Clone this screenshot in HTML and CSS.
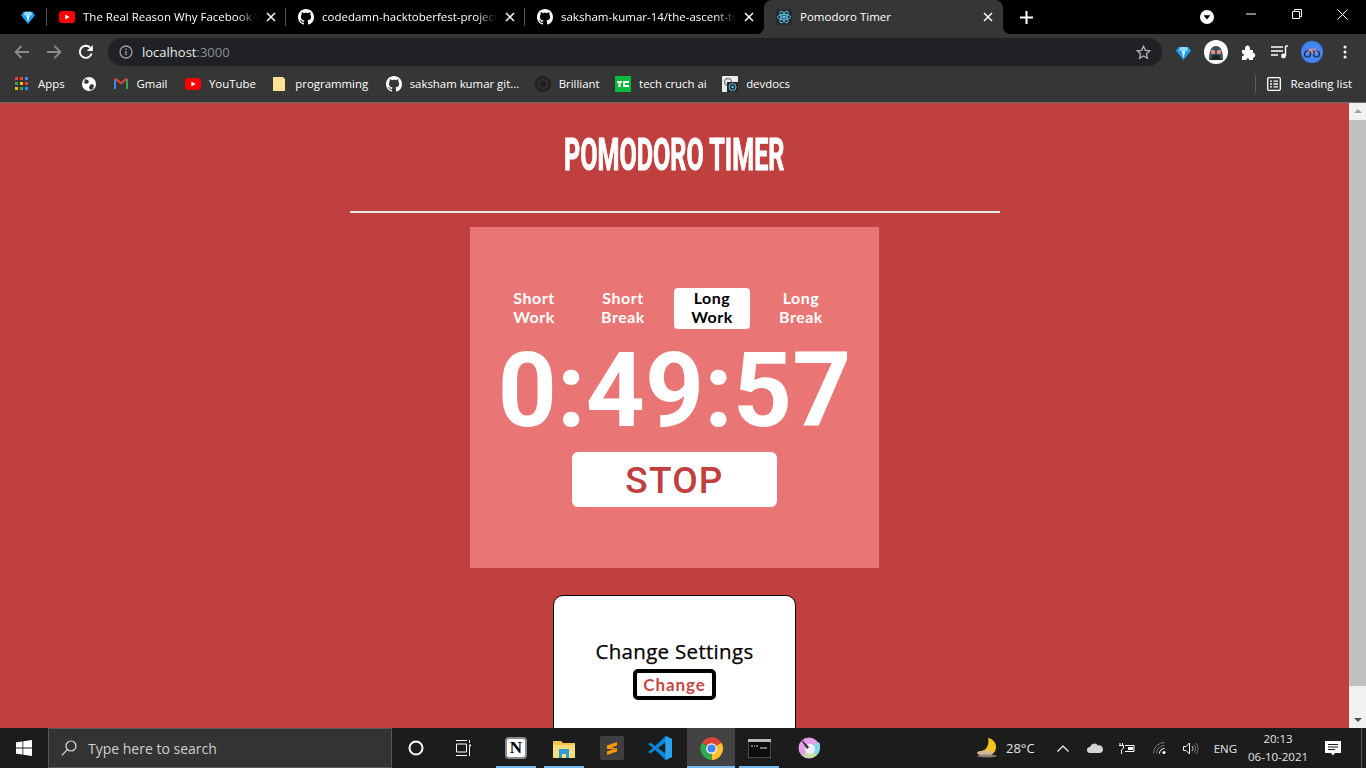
FILE: index.html
```html
<!DOCTYPE html>
<html lang="en">
  <head>
    <meta charset="UTF-8" />
    <meta name="viewport" content="width=device-width, initial-scale=1.0" />
    <title>Pomodoro Timer</title>
    <link rel="stylesheet" href="styles.css">
  </head>
  <body>
    <svg class="defs" width="0" height="0">
      <defs>
        <symbol id="gh" viewBox="0 0 16 16"><path fill="#fff" d="M8 0C3.58 0 0 3.58 0 8c0 3.54 2.29 6.53 5.47 7.59.4.07.55-.17.55-.38 0-.19-.01-.82-.01-1.49-2.01.37-2.53-.49-2.69-.94-.09-.23-.48-.94-.82-1.13-.28-.15-.68-.52-.01-.53.63-.01 1.08.58 1.23.82.72 1.21 1.87.87 2.33.66.07-.52.28-.87.51-1.07-1.78-.2-3.64-.89-3.64-3.95 0-.87.31-1.59.82-2.15-.08-.2-.36-1.02.08-2.12 0 0 .67-.21 2.2.82.64-.18 1.32-.27 2-.27.68 0 1.36.09 2 .27 1.53-1.04 2.2-.82 2.2-.82.44 1.1.16 1.92.08 2.12.51.56.82 1.27.82 2.15 0 3.07-1.87 3.75-3.65 3.95.29.25.54.73.54 1.48 0 1.07-.01 1.93-.01 2.2 0 .21.15.46.55.38A8.013 8.013 0 0016 8c0-4.42-3.58-8-8-8z"/></symbol>
        <symbol id="yt" viewBox="0 0 16 12"><rect width="16" height="12" rx="3" fill="#f00"/><path d="M6.3 3.4v5.2L10.6 6z" fill="#fff"/></symbol>
        <symbol id="gem" viewBox="0 0 16 16"><path d="M3 2h10l3 4-8 10L0 6z" fill="#1e9df2"/><path d="M4.5 2h7L13 6H3z" fill="#8fdcff"/><path d="M6 6h4l-2 8z" fill="#d5f4ff"/></symbol>
        <symbol id="x" viewBox="0 0 10 10"><path d="M1 1l8 8M9 1L1 9" stroke="#fff" stroke-width="1.5" fill="none"/></symbol>
        <symbol id="atom" viewBox="0 0 16 16"><rect width="16" height="16" rx="2" fill="#22282c"/><g fill="none" stroke="#61dafb" stroke-width=".8"><ellipse cx="8" cy="8" rx="6.6" ry="2.6"/><ellipse cx="8" cy="8" rx="6.6" ry="2.6" transform="rotate(60 8 8)"/><ellipse cx="8" cy="8" rx="6.6" ry="2.6" transform="rotate(120 8 8)"/></g><circle cx="8" cy="8" r="1.4" fill="#61dafb"/></symbol>
      </defs>
    </svg>

    <div class="tabstrip">
      <div class="pinned"><svg width="14" height="14"><use href="#gem"/></svg></div>
      <div class="tab sep">
        <svg class="fav yt-fav" width="16" height="12"><use href="#yt"/></svg>
        <span class="tab-title">The Real Reason Why Facebook V</span>
        <svg class="tab-x" width="10" height="10"><use href="#x"/></svg>
      </div>
      <div class="tab sep">
        <svg class="fav" width="16" height="16"><use href="#gh"/></svg>
        <span class="tab-title">codedamn-hacktoberfest-project</span>
        <svg class="tab-x" width="10" height="10"><use href="#x"/></svg>
      </div>
      <div class="tab">
        <svg class="fav" width="16" height="16"><use href="#gh"/></svg>
        <span class="tab-title">saksham-kumar-14/the-ascent-to</span>
        <svg class="tab-x" width="10" height="10"><use href="#x"/></svg>
      </div>
      <div class="tab active">
        <svg class="fav" width="16" height="16"><use href="#atom"/></svg>
        <span class="tab-title">Pomodoro Timer</span>
        <svg class="tab-x" width="10" height="10"><use href="#x"/></svg>
      </div>
      <svg class="new-tab" width="13" height="13" viewBox="0 0 13 13"><path d="M6.5 0v13M0 6.5h13" stroke="#fff" stroke-width="2"/></svg>
      <div class="window-btns">
        <span class="tab-search"><svg width="14" height="14" viewBox="0 0 14 14"><circle cx="7" cy="7" r="7" fill="#fff"/><path d="M3.600 5.200h6.800L7 9.600z" fill="#000"/></svg></span>
        <svg class="win-btn win-min" width="10" height="10" viewBox="0 0 10 10"><path d="M0 5h10" stroke="#fff"/></svg>
        <svg class="win-btn win-max" width="10" height="10" viewBox="0 0 10 10"><path d="M.5 2.500h7v7h-7zM2.500 2.500v-2h7v7h-2" fill="none" stroke="#fff"/></svg>
        <svg class="win-btn win-close" width="11" height="11" viewBox="0 0 11 11"><path d="M.5.5l10 10M10.500.5l-10 10" stroke="#fff"/></svg>
      </div>
    </div>

    <div class="toolbar">
      <svg class="nav" width="16" height="14" viewBox="0 0 16 14"><path d="M15 7H2M7.500 1L1.500 7l6 6" fill="none" stroke="#8b8c8e" stroke-width="1.800"/></svg>
      <svg class="nav" width="16" height="14" viewBox="0 0 16 14"><path d="M1 7h13M8.500 1l6 6-6 6" fill="none" stroke="#8b8c8e" stroke-width="1.800"/></svg>
      <svg class="nav" width="16" height="16" viewBox="0 0 16 16"><path d="M13.600 9.500A6 6 0 1 1 12.300 3.800" fill="none" stroke="#fff" stroke-width="1.900"/><path d="M14.800 1v6h-6z" fill="#fff"/></svg>
      <div class="omnibox">
        <svg width="14" height="14" viewBox="0 0 14 14"><circle cx="7" cy="7" r="6" fill="none" stroke="#9aa0a6" stroke-width="1.300"/><path d="M7 6v4.200M7 3.500v1.400" stroke="#9aa0a6" stroke-width="1.300"/></svg>
        <span class="url">localhost<span class="url-port">:3000</span></span>
        <svg class="star" width="15" height="15" viewBox="0 0 15 15"><path d="M7.500 1.300l1.900 4 4.400.5-3.300 3 .9 4.400-3.900-2.200-3.900 2.200.9-4.400-3.300-3 4.400-.5z" fill="none" stroke="#b5b6b8" stroke-width="1.300"/></svg>
      </div>
      <div class="ext">
        <svg class="ext-gem" width="15" height="15"><use href="#gem"/></svg>
        <span class="ext-avatar"><svg width="24" height="24" viewBox="0 0 24 24"><circle cx="12" cy="12" r="12" fill="#fff"/><path d="M5 20c0-6 1-14 7-14s7 8 7 14z" fill="#2f5566"/><path d="M7 20l2-5h6l2 5z" fill="#222"/><circle cx="9" cy="12" r="2.300" fill="#f28b6c"/><circle cx="15" cy="12" r="2.300" fill="#f28b6c"/></svg></span>
        <svg class="ext-puzzle" width="15" height="15" viewBox="0 0 15 15"><path d="M1 5h3c-.5-3 1-4.500 2.500-4.500S9.500 2 9 5h3v3c3-.5 3 5 0 4.500V15H8c.5-2.500-3-2.500-2.500 0H1v-4c2.500.5 2.500-3 0-2.500z" fill="#fff"/></svg>
        <svg class="ext-media" width="17" height="14" viewBox="0 0 17 14"><path d="M0 2h12M0 6h12M0 10h7" stroke="#fff" stroke-width="1.400"/><path d="M14.500 1v10" stroke="#fff" stroke-width="1.400"/><path d="M14.500 1H17" stroke="#fff" stroke-width="1.400"/><circle cx="12.500" cy="11" r="2.400" fill="#fff"/></svg>
        <span class="ext-profile"><svg width="22" height="22" viewBox="0 0 22 22"><circle cx="11" cy="11" r="11" fill="#4285f4"/><circle cx="6.500" cy="13" r="3" fill="none" stroke="#1f2a44" stroke-width="1.200"/><circle cx="15.500" cy="13" r="3" fill="none" stroke="#1f2a44" stroke-width="1.200"/><path d="M6.500 13l3-5h5l1 5M9.500 8l2.500 5" fill="none" stroke="#f28b6c" stroke-width="1.200"/></svg></span>
        <svg class="ext-menu" width="4" height="14" viewBox="0 0 4 14"><circle cx="2" cy="2" r="1.500" fill="#fff"/><circle cx="2" cy="7" r="1.500" fill="#fff"/><circle cx="2" cy="12" r="1.500" fill="#fff"/></svg>
      </div>
    </div>

    <div class="bookmarks">
      <div class="mark mark-apps">
        <svg width="13" height="13" viewBox="0 0 13 13"><g fill="#ea4335"><rect width="3" height="3"/><rect x="5" width="3" height="3"/></g><rect x="10" width="3" height="3" fill="#4285f4"/><rect y="5" width="3" height="3" fill="#34a853"/><rect x="5" y="5" width="3" height="3" fill="#fbbc05"/><rect x="10" y="5" width="3" height="3" fill="#ea4335"/><rect y="10" width="3" height="3" fill="#fbbc05"/><rect x="5" y="10" width="3" height="3" fill="#34a853"/><rect x="10" y="10" width="3" height="3" fill="#4285f4"/></svg>
        Apps
      </div>
      <div class="mark">
        <svg width="14" height="14" viewBox="0 0 14 14"><circle cx="7" cy="7" r="7" fill="#fff"/><path d="M3 2l3 1 1 2-2 2-3-1zM9 7l3 1-1 4-3 1-1-3z" fill="#35363a"/></svg>
      </div>
      <div class="mark mark-gmail">
        <svg width="14" height="11" viewBox="0 0 14 11"><path d="M0 11V1l2 .5V11z" fill="#4285f4"/><path d="M14 11V1l-2 .5V11z" fill="#34a853"/><path d="M0 1c1-1 2-1 2.500-.5L7 4l4.500-3.500c.5-.5 1.500-.5 2.500.5L7 6.500z" fill="#ea4335"/></svg>
        Gmail
      </div>
      <div class="mark">
        <svg width="16" height="12"><use href="#yt"/></svg>
        YouTube
      </div>
      <div class="mark mark-folder">
        <svg width="12" height="14" viewBox="0 0 12 14"><path d="M0 0h10l2 2v12H0z" fill="#fde293"/></svg>
        programming
      </div>
      <div class="mark">
        <svg width="16" height="16"><use href="#gh"/></svg>
        saksham kumar git...
      </div>
      <div class="mark tight">
        <svg width="16" height="16" viewBox="0 0 16 16"><circle cx="8" cy="8" r="8" fill="#202020"/><circle cx="8" cy="8" r="4.500" fill="none" stroke="#3c3c3c" stroke-width="2" stroke-dasharray="1.500 1"/></svg>
        Brilliant
      </div>
      <div class="mark tight">
        <svg width="16" height="16" viewBox="0 0 16 16"><rect width="16" height="16" fill="#0dba3f"/><path d="M2 5h5v2H5.500v4h-2V7H2zM8 5h6v2H10v2h4v2H8z" fill="#fff"/></svg>
        tech cruch ai
      </div>
      <div class="mark tight">
        <svg width="16" height="16" viewBox="0 0 16 16"><rect width="16" height="16" rx="1" fill="#eee"/><circle cx="6" cy="6" r="3.500" fill="none" stroke="#888" stroke-width="1.500"/><rect x="5" y="6" width="11" height="10" fill="#22282c"/><circle cx="10.500" cy="11" r="3.500" fill="none" stroke="#61dafb" stroke-width=".9"/><circle cx="10.500" cy="11" r="1.200" fill="#61dafb"/></svg>
        devdocs
      </div>
      <div class="reading">
        <svg width="14" height="14" viewBox="0 0 14 14"><rect x=".7" y=".7" width="12.600" height="12.600" rx="1" fill="none" stroke="#fff" stroke-width="1.300"/><path d="M3 4.200h2M6.500 4.200H11M3 7h2M6.500 7H11M3 9.800h2M6.500 9.800H11" stroke="#fff" stroke-width="1.300"/></svg>
        Reading list
      </div>
    </div>

    <div class="viewport">
      <div class="page">
        <h1 class="title"><span>Pomodoro Timer</span></h1>
        <hr class="rule" />
        <section class="timer-card">
          <div class="modes">
            <button class="mode">Short Work</button>
            <button class="mode">Short Break</button>
            <button class="mode selected">Long Work</button>
            <button class="mode">Long Break</button>
          </div>
          <div class="clock">0:49:57</div>
          <button class="stop">STOP</button>
        </section>
        <section class="settings">
          <h2>Change Settings</h2>
          <button class="change">Change</button>
        </section>
      </div>
      <div class="scrollbar">
        <span class="arrow up"></span>
        <span class="thumb"></span>
        <span class="arrow down"></span>
      </div>
    </div>

    <div class="taskbar">
      <div class="start"><svg width="16" height="16" viewBox="0 0 16 16"><path d="M0 2.300l6.500-.9v6.200H0zM7.300 1.300L16 0v7.600H7.300zM0 8.400h6.500v6.200L0 13.700zM7.300 8.400H16V16l-8.700-1.300z" fill="#fff"/></svg></div>
      <div class="search">
        <svg width="16" height="16" viewBox="0 0 16 16"><circle cx="10" cy="6" r="5" fill="none" stroke="#ddd" stroke-width="1.200"/><path d="M6.300 9.700L.8 15.300" stroke="#ddd" stroke-width="1.200"/></svg>
        Type here to search
      </div>
      <div class="task"><svg width="16" height="16" viewBox="0 0 16 16"><circle cx="8" cy="8" r="6.500" fill="none" stroke="#fff" stroke-width="2"/></svg></div>
      <div class="task"><svg width="16" height="16" viewBox="0 0 16 16"><path d="M0 .5h11M0 15.500h11M.5 4h10v8H.5zM13.500 0v3M13.500 7v9" fill="none" stroke="#fff"/><rect x="13" y="4.500" width="2" height="2" fill="#fff"/></svg></div>
      <div class="task pin pin-first"><span class="notion">N</span></div>
      <div class="task pin">
        <svg width="22" height="19" viewBox="0 0 22 19"><path d="M0 2h8l2 2h12v15H0z" fill="#f3c44c"/><path d="M0 6h22v13H0z" fill="#fbdc7a"/><path d="M6 10h10v9h-3v-4H9v4H6z" fill="#2b9ae0"/></svg>
      </div>
      <div class="task">
        <span class="sublime"><svg width="12" height="15" viewBox="0 0 12 15"><path d="M1 4.500L11 1v3.500L1 8zM11 7L1 10.500V14l10-3.500zM1 4.500L11 8 1 8z" fill="#ff9800"/></svg></span>
      </div>
      <div class="task">
        <svg width="24" height="24" viewBox="0 0 24 24"><path d="M17.500 0L24 3v18l-6.500 3L7 14l-4.500 3.500L0 16l5-4-5-4 2.500-1.500L7 10z" fill="#0a84d6"/><path d="M17.500 6.500L10 12l7.500 5.500z" fill="#1e1e1e"/><path d="M17.500 0L24 3v18l-6.500 3z" fill="#2aa3ee"/></svg>
      </div>
      <div class="task pin active-task">
        <svg width="23" height="23" viewBox="0 0 24 24"><path d="M12 12L2 6a12 12 0 0 1 20.400 0z" fill="#db4437"/><path d="M12 12L22.400 6A12 12 0 0 1 12 24z" fill="#fbc02d"/><path d="M12 12v12A12 12 0 0 1 2 6z" fill="#2da94f"/><circle cx="12" cy="12" r="5.600" fill="#fff"/><circle cx="12" cy="12" r="4.300" fill="#4285f4"/></svg>
      </div>
      <div class="task pin">
        <svg width="23" height="19" viewBox="0 0 23 19"><rect width="23" height="19" fill="#0c0c0c" stroke="#888"/><rect width="23" height="3" fill="#bbb"/><path d="M3 7h2M6 7h1M8 7h2M12 9h7" stroke="#ddd"/></svg>
      </div>
      <div class="task task-last">
        <svg width="22" height="22" viewBox="0 0 22 22"><circle cx="11" cy="11" r="10.500" fill="#e3a2e8"/><path d="M11 11L21 5a11 11 0 0 1-2 13z" fill="#7fd6e8"/><path d="M11 11l8 7a11 11 0 0 1-14 1z" fill="#c5e4a0"/><circle cx="12" cy="12" r="5" fill="#f0eef5"/><path d="M1 0l10 10-2 2z" fill="#2c2c2c"/></svg>
      </div>
      <div class="tray">
        <svg class="moon" width="22" height="20" viewBox="0 0 22 20"><path d="M13 0a9 9 0 1 1-9 13c5 1 11-4 9-13z" fill="#f6c21c"/><ellipse cx="10" cy="15" rx="8" ry="2.500" fill="#cdb79a"/><ellipse cx="12" cy="18" rx="10" ry="1.500" fill="#8d7d6d"/></svg>
        <span class="temp">28°C</span>
        <svg class="chev" width="12" height="7" viewBox="0 0 12 7"><path d="M.5 6.500L6 1l5.500 5.500" fill="none" stroke="#fff" stroke-width="1.200"/></svg>
        <svg class="cloud" width="16" height="10" viewBox="0 0 16 10"><path d="M3 10a3 3 0 0 1 0-6 4.500 4.500 0 0 1 8-1.500A3.500 3.500 0 0 1 13 10z" fill="#d5d5d5"/></svg>
        <svg class="batt" width="16" height="11" viewBox="0 0 16 11"><path d="M6 2.500h9v6H6" fill="none" stroke="#fff"/><rect x="9" y="4" width="5" height="3" fill="#fff"/><path d="M1 0v2M3.500 0v2M0 2.500h4.500V5L2.500 7v4" fill="none" stroke="#fff"/></svg>
        <svg class="wifi" width="14" height="12" viewBox="0 0 14 12"><g fill="none" stroke="#777"><path d="M.5 11.500A11 11 0 0 1 11.500.5"/><path d="M3.500 11.500a8 8 0 0 1 8-8"/></g><path d="M6.500 11.500a5 5 0 0 1 5-5" fill="none" stroke="#fff"/><circle cx="11" cy="10.500" r="1.500" fill="#fff"/></svg>
        <svg class="vol" width="16" height="13" viewBox="0 0 16 13"><path d="M.5 4.500h2.500l3.500-3.500v11L3 8.500H.5z" fill="none" stroke="#fff"/><path d="M9 4a3.500 3.500 0 0 1 0 5" fill="none" stroke="#ccc"/><path d="M11 2.500a6 6 0 0 1 0 8M13 1a8.500 8.500 0 0 1 0 11" fill="none" stroke="#777"/></svg>
        <span class="lang">ENG</span>
        <div class="datetime"><span>20:13</span><span>06-10-2021</span></div>
        <svg class="notif" width="16" height="15" viewBox="0 0 16 15"><path d="M0 0h16v12H10l-2 2.500L6 12H0z" fill="#fff"/><path d="M3 3.500h10M3 6h10M3 8.500h7" stroke="#1c1c1c"/></svg>
        <span class="show-desktop"></span>
      </div>
    </div>
  </body>
</html>
```

FILE: styles.css
```css
* {
  box-sizing: border-box;
}
html,
body {
  height: 100%;
}
body {
  margin: 0;
  width: 1366px;
  height: 768px;
  display: flex;
  flex-direction: column;
  overflow: hidden;
  font-family: "Open Sans", Arial, sans-serif;
  font-size: 12px;
  color: #fff;
  background-color: #000;
}
svg {
  display: block;
  flex-shrink: 0;
}
.defs {
  position: absolute;
}

/* browser chrome */
.tabstrip {
  height: 34px;
  flex-shrink: 0;
  display: flex;
  align-items: center;
  padding-left: 8px;
  background-color: #000;
}
.pinned {
  width: 39px;
  height: 18px;
  flex-shrink: 0;
  padding-left: 2px;
  display: flex;
  align-items: center;
  justify-content: center;
  border-right: 1px solid #555;
}
.tab {
  position: relative;
  width: 239px;
  height: 34px;
  flex-shrink: 0;
  display: flex;
  align-items: center;
  padding: 0 10px 1px 12px;
}
.sep::after {
  content: "";
  position: absolute;
  right: 0;
  top: 8px;
  height: 18px;
  border-right: 1px solid #555;
}
.tab.active {
  background-color: #363636;
  border-radius: 8px 8px 0 0;
}
.tab.active::before,
.tab.active::after {
  content: "";
  position: absolute;
  bottom: 0;
  width: 8px;
  height: 8px;
}
.tab.active::before {
  left: -8px;
  background: radial-gradient(circle at 0 0, #000 8px, #363636 8.5px);
}
.tab.active::after {
  right: -8px;
  background: radial-gradient(circle at 100% 0, #000 8px, #363636 8.5px);
}
.fav {
  margin-right: 8px;
}
.tab-title {
  flex: 1;
  min-width: 0;
  white-space: nowrap;
  font-size: 11.5px;
  -webkit-mask-image: linear-gradient(to right, #000 88%, transparent 100%);
  mask-image: linear-gradient(to right, #000 88%, transparent 100%);
}
.tab.active .tab-title {
  -webkit-mask-image: none;
  mask-image: none;
}
.tab-x {
  margin-left: 8px;
}
.new-tab {
  margin-left: 17px;
}
.window-btns {
  flex: 1;
  display: flex;
  align-items: center;
}
.tab-search {
  margin-left: 167px;
}
.win-btn {
  margin-bottom: 6px;
}
.win-min {
  margin-left: 32px;
}
.win-max {
  margin-left: 36px;
}
.win-close {
  margin-left: 35px;
}
.toolbar {
  height: 34px;
  flex-shrink: 0;
  display: flex;
  align-items: center;
  padding: 2px 0 0 14px;
  background-color: #363636;
}
.nav {
  margin-right: 16px;
}
.omnibox {
  width: 1054px;
  height: 28px;
  margin-left: -2px;
  padding: 0 11px 0 11px;
  display: flex;
  align-items: center;
  border-radius: 14px;
  background-color: #202124;
}
.url {
  flex: 1;
  margin-left: 9px;
  font-size: 13px;
  color: #e8eaed;
}
.url-port {
  color: #8a8d91;
}
.ext {
  display: flex;
  align-items: center;
  margin-left: 14px;
}
.ext-avatar {
  margin-left: 13px;
}
.ext-puzzle {
  margin-left: 13px;
}
.ext-media {
  margin-left: 15px;
}
.ext-profile {
  margin-left: 13px;
}
.ext-menu {
  margin-left: 20px;
}
.bookmarks {
  height: 35px;
  flex-shrink: 0;
  display: flex;
  align-items: center;
  gap: 17.5px;
  padding: 0 14px 3px 15px;
  background-color: #363636;
  border-bottom: 1px solid #6e6e6e;
}
.mark {
  display: flex;
  align-items: center;
  gap: 8px;
  white-space: nowrap;
  font-size: 11.4px;
}
.mark-apps {
  gap: 10px;
}
.mark-gmail {
  gap: 9px;
}
.mark-folder {
  gap: 10px;
}
.tight {
  margin-left: -2px;
}
.reading {
  margin-left: auto;
  padding-left: 11px;
  height: 18px;
  display: flex;
  align-items: center;
  gap: 9px;
  white-space: nowrap;
  font-size: 11.5px;
  border-left: 1px solid #5c5c5c;
}

/* the app */
.viewport {
  flex: 1;
  min-height: 0;
  display: flex;
  background-color: #c04040;
}
.page {
  flex: 1;
  display: flex;
  flex-direction: column;
  align-items: center;
  overflow: hidden;
}
.title {
  flex-shrink: 0;
  margin: 27px 0 0;
  height: 50px;
  font-family: Roboto, sans-serif;
  font-size: 44px;
  font-weight: 700;
  line-height: 50px;
  text-transform: uppercase;
  white-space: nowrap;
}
.title span {
  display: inline-block;
  transform: scaleX(0.57);
  -webkit-text-stroke: 1px #fff;
}
.rule {
  width: 650px;
  height: 2px;
  flex-shrink: 0;
  margin: 31px 0 14px;
  border: 0;
  background-color: #e6e6e6;
}
.timer-card {
  width: 409px;
  height: 341px;
  flex-shrink: 0;
  padding-top: 61px;
  display: flex;
  flex-direction: column;
  align-items: center;
  background-color: #e97575;
}
.modes {
  display: flex;
  gap: 13px;
  margin-left: -14px;
}
.mode {
  width: 76px;
  height: 41px;
  padding: 0 0 2px;
  border: 0;
  border-radius: 4px;
  background: transparent;
  color: #fff;
  font-family: Lato, sans-serif;
  font-size: 16px;
  font-weight: 700;
  letter-spacing: 0.5px;
  line-height: 18.5px;
}
.mode.selected {
  background-color: #fff;
  color: #000;
}
.clock {
  margin-top: 5px;
  font-family: Roboto, sans-serif;
  font-size: 103px;
  font-weight: 700;
  line-height: 114px;
  white-space: nowrap;
}
.stop {
  width: 205px;
  height: 55px;
  margin-top: 4px;
  padding: 2px 0 0;
  flex-shrink: 0;
  border: 0;
  border-radius: 6px;
  background-color: #fff;
  color: #c04040;
  font-family: Roboto, sans-serif;
  font-size: 37px;
  font-weight: 500;
  letter-spacing: 1.2px;
}
.settings {
  width: 243px;
  height: 160px;
  flex-shrink: 0;
  margin-top: 27px;
  padding-top: 40px;
  display: flex;
  flex-direction: column;
  align-items: center;
  background-color: #fff;
  border: 1px solid #000;
  border-radius: 10px;
}
.settings h2 {
  margin: 0;
  height: 30px;
  color: #000;
  font-size: 20.5px;
  font-weight: 500;
  letter-spacing: 0.3px;
  line-height: 30px;
  -webkit-text-stroke: 0.25px #000;
}
.change {
  width: 83px;
  height: 31px;
  margin-top: 3px;
  padding: 0;
  flex-shrink: 0;
  background-color: #fff;
  border: 4px solid #000;
  border-radius: 5px;
  color: #c84848;
  font-family: Lato, sans-serif;
  font-size: 17px;
  font-weight: 700;
  letter-spacing: 0.9px;
}
.scrollbar {
  width: 17px;
  flex-shrink: 0;
  display: flex;
  flex-direction: column;
  align-items: center;
  background-color: #f1f1f1;
}
.arrow {
  width: 0;
  height: 0;
  flex-shrink: 0;
  border-left: 4px solid transparent;
  border-right: 4px solid transparent;
}
.arrow.up {
  margin-top: 6px;
  border-bottom: 4px solid #a3a3a3;
}
.arrow.down {
  margin-bottom: 6px;
  border-top: 4px solid #505050;
}
.thumb {
  width: 100%;
  flex: 1;
  margin: 7px 0 32px;
  background-color: #c1c1c1;
}

/* windows taskbar */
.taskbar {
  height: 40px;
  flex-shrink: 0;
  display: flex;
  align-items: stretch;
  background-color: #1c1c1c;
}
.start {
  width: 48px;
  flex-shrink: 0;
  display: flex;
  align-items: center;
  justify-content: center;
}
.search {
  width: 344px;
  flex-shrink: 0;
  display: flex;
  align-items: center;
  gap: 11px;
  padding-left: 12px;
  background-color: #333;
  border: 1px solid #585858;
  color: #cfcfcf;
  font-size: 14px;
}
.task {
  position: relative;
  width: 48px;
  flex-shrink: 0;
  display: flex;
  align-items: center;
  justify-content: center;
}
.pin::after {
  content: "";
  position: absolute;
  left: 4px;
  right: 4px;
  bottom: 0;
  height: 2px;
  background-color: #76b9ed;
}
.pin-first {
  margin-left: 4px;
}
.task-last {
  margin-left: 2px;
}
.active-task {
  margin-left: 3px;
  background-color: #434343;
}
.active-task::after {
  left: 0;
  right: 0;
}
.notion {
  width: 22px;
  height: 22px;
  display: block;
  border: 2px solid #8a8a8a;
  border-radius: 4px;
  background-color: #fff;
  color: #000;
  font-family: "Liberation Serif", serif;
  font-size: 17px;
  font-weight: 700;
  line-height: 18px;
  text-align: center;
}
.sublime {
  width: 24px;
  height: 24px;
  display: flex;
  align-items: center;
  justify-content: center;
  border-radius: 2px;
  background-color: #3f3f3f;
}
.tray {
  flex: 1;
  min-width: 0;
  display: flex;
  align-items: center;
  padding-left: 142px;
  font-size: 11.5px;
  color: #e6e6e6;
}
.temp {
  margin-left: 9px;
  font-size: 13px;
}
.chev {
  margin-left: 22px;
}
.cloud {
  margin-left: 18px;
}
.batt {
  margin-left: 16px;
}
.wifi {
  margin-left: 18px;
}
.vol {
  margin-left: 16px;
}
.lang {
  margin-left: 15px;
}
.datetime {
  width: 74px;
  margin-left: 4px;
  display: flex;
  flex-direction: column;
  align-items: center;
  line-height: 18px;
}
.notif {
  margin-left: 10px;
}
.show-desktop {
  height: 100%;
  margin-left: 20px;
  border-left: 1px solid #555;
}
```
